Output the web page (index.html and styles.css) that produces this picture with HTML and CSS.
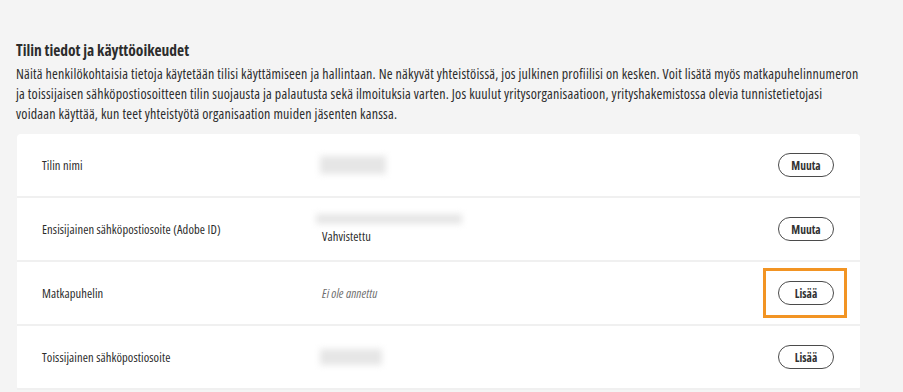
FILE: index.html
```html
<!DOCTYPE html>
<html lang="fi">
<head>
    <meta charset="UTF-8">
    <meta name="viewport" content="width=device-width, initial-scale=1.0">
    <title>Tilin tiedot</title>
    <link rel="stylesheet" href="styles.css">
</head>
<body>
    <div class="page">
        <h2>Tilin tiedot ja käyttöoikeudet</h2>
        <p class="intro">Näitä henkilökohtaisia tietoja käytetään tilisi käyttämiseen ja hallintaan. Ne näkyvät yhteistöissä, jos julkinen profiilisi on kesken. Voit lisätä myös matkapuhelinnumeron ja toissijaisen sähköpostiosoitteen tilin suojausta ja palautusta sekä ilmoituksia varten. Jos kuulut yritysorganisaatioon, yrityshakemistossa olevia tunnistetietojasi<br>voidaan käyttää, kun teet yhteistyötä organisaation muiden jäsenten kanssa.</p>

        <div class="card">
            <div class="row">
                <div class="label">Tilin nimi</div>
                <div class="value"><span class="blur blur-name"></span></div>
                <button class="btn">Muuta</button>
            </div>
            <div class="row">
                <div class="label">Ensisijainen sähköpostiosoite (Adobe ID)</div>
                <div class="value">
                    <span class="blur blur-email"></span>
                    <span class="status">Vahvistettu</span>
                </div>
                <button class="btn">Muuta</button>
            </div>
            <div class="row">
                <div class="label">Matkapuhelin</div>
                <div class="value"><span class="empty">Ei ole annettu</span></div>
                <span class="highlight"><button class="btn">Lisää</button></span>
            </div>
            <div class="row">
                <div class="label">Toissijainen sähköpostiosoite</div>
                <div class="value"><span class="blur blur-second"></span></div>
                <button class="btn">Lisää</button>
            </div>
        </div>
    </div>
</body>
</html>
```

FILE: styles.css
```css
body {
    margin: 0;
    background-color: #f4f4f4;
    font-family: "Open Sans", sans-serif;
    font-stretch: 75%;
    color: #2c2c2c;
}
.page {
    width: 850px;
    padding: 40px 0 0 16px;
}
h2 {
    margin: 0;
    font-size: 15.5px;
    line-height: 20px;
    font-weight: bold;
}
.intro {
    margin: 4px 0 10px;
    font-size: 14px;
    line-height: 20px;
    letter-spacing: 0.2px;
}
.card {
    width: 843px;
    margin-left: 1px;
    background-color: white;
    border-radius: 4px;
}
.row {
    display: flex;
    align-items: center;
    height: 64px;
    box-sizing: border-box;
    padding: 0 26px 0 25px;
    border-bottom: 2px solid #f0f0f0;
    font-size: 12.5px;
    letter-spacing: 0.1px;
}
.label {
    width: 280px;
    flex-shrink: 0;
}
.value {
    flex: 1;
    display: flex;
    flex-direction: column;
    align-items: flex-start;
}
.blur {
    display: block;
    background-color: #e6e6e6;
    filter: blur(3px);
}
.blur-name {
    width: 66px;
    height: 18px;
    margin-left: -2px;
}
.blur-email {
    width: 146px;
    height: 10px;
    margin: 0 0 4px -6px;
}
.blur-second {
    width: 62px;
    height: 16px;
    margin-left: -2px;
}
.empty {
    font-style: italic;
    color: #6e6e6e;
}
.btn {
    width: 56px;
    height: 24px;
    padding: 0;
    border: 1.5px solid #4b4b4b;
    border-radius: 12px;
    background-color: white;
    font-family: "Open Sans", sans-serif;
    font-stretch: 75%;
    font-size: 11.5px;
    font-weight: bold;
    color: #323232;
    cursor: pointer;
}
.highlight {
    position: relative;
    display: flex;
}
.highlight::after {
    content: "";
    position: absolute;
    left: -15px;
    right: -13px;
    top: -13px;
    bottom: -13px;
    border: 3px solid #f29423;
}
```
